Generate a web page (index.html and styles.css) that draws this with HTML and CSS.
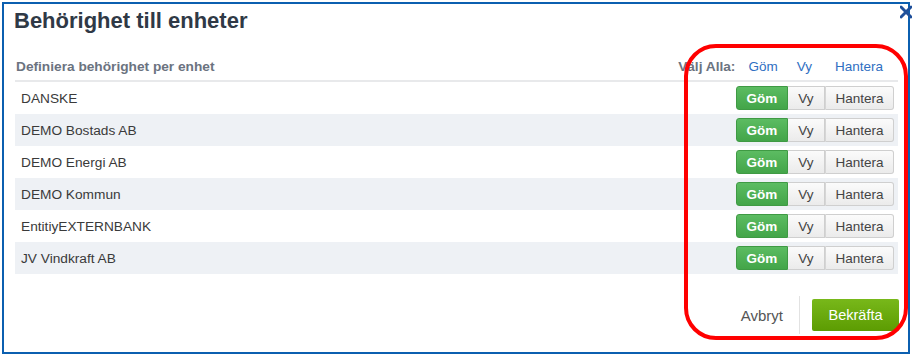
FILE: index.html
```html
<!DOCTYPE html>
<html lang="sv">
<head>
<meta charset="utf-8">
<title>Behörighet till enheter</title>
<link rel="stylesheet" href="styles.css">
</head>
<body>
<div class="dialog">
  <svg class="close" width="12" height="14" viewBox="0 0 12 14"><path d="M1 2 L11 12 M11 2 L1 12" stroke="#1e4f9a" stroke-width="3" stroke-linecap="round"/></svg>
  <h1 class="title">Behörighet till enheter</h1>
  <div class="table">
    <div class="head">
      <span class="head-label">Definiera behörighet per enhet</span>
      <div class="select-all">
        <span class="head-label">Välj Alla:</span>
        <a class="link l-gom">Göm</a>
        <a class="link l-vy">Vy</a>
        <a class="link l-han">Hantera</a>
      </div>
    </div>
    <div class="row"><span class="name">DANSKE</span><div class="group"><span class="btn on">Göm</span><span class="btn vy">Vy</span><span class="btn han">Hantera</span></div></div>
    <div class="row alt"><span class="name">DEMO Bostads AB</span><div class="group"><span class="btn on">Göm</span><span class="btn vy">Vy</span><span class="btn han">Hantera</span></div></div>
    <div class="row"><span class="name">DEMO Energi AB</span><div class="group"><span class="btn on">Göm</span><span class="btn vy">Vy</span><span class="btn han">Hantera</span></div></div>
    <div class="row alt"><span class="name">DEMO Kommun</span><div class="group"><span class="btn on">Göm</span><span class="btn vy">Vy</span><span class="btn han">Hantera</span></div></div>
    <div class="row"><span class="name">EntitiyEXTERNBANK</span><div class="group"><span class="btn on">Göm</span><span class="btn vy">Vy</span><span class="btn han">Hantera</span></div></div>
    <div class="row alt"><span class="name">JV Vindkraft AB</span><div class="group"><span class="btn on">Göm</span><span class="btn vy">Vy</span><span class="btn han">Hantera</span></div></div>
  </div>
  <div class="footer">
    <span class="cancel">Avbryt</span>
    <span class="sep"></span>
    <span class="confirm">Bekräfta</span>
  </div>
  <div class="highlight"></div>
</div>
</body>
</html>
```
FILE: styles.css
```css
* { box-sizing: border-box; }
html, body { margin: 0; padding: 0; background: #fff; }
body { font-family: "Liberation Sans", Arial, sans-serif; }

.dialog {
  position: relative;
  margin: 2px;
  width: 908px;
  height: 352px;
  border: 2px solid #0b5fb0;
  padding: 0 10px 0 11px;
}

.close {
  position: absolute;
  top: 1px;
  right: -4px;
}

.title {
  margin: 0;
  padding: 3px 0 0 0;
  margin-left: -1px;
  font-size: 22px;
  line-height: 28px;
  font-weight: bold;
  color: #2f3946;
}

.table { margin-top: 17px; }

.head {
  display: flex;
  justify-content: space-between;
  align-items: center;
  height: 30px;
  border-bottom: 2px solid #e8e9eb;
  padding: 0 0 0 1px;
}
.head-label {
  font-size: 13.7px;
  font-weight: bold;
  color: #6b7380;
}
.select-all { display: flex; align-items: center; padding-right: 15px; }
.link { font-size: 13.5px; color: #2f6fc2; text-decoration: none; }
.l-gom { margin-left: 13px; }
.l-vy { margin-left: 19px; }
.l-han { margin-left: 23px; }

.row {
  display: flex;
  justify-content: space-between;
  align-items: center;
  height: 32px;
  padding: 0 4px 0 6px;
}
.row.alt { background: #eef1f5; }
.name { font-size: 13.7px; color: #3a3a3a; }

.group { display: flex; height: 24px; }
.btn {
  display: flex;
  align-items: center;
  justify-content: center;
  font-size: 13.5px;
  color: #444;
  border: 1px solid #cfcfcf;
  background: linear-gradient(#fbfbfb, #ebebeb);
}
.btn.on {
  width: 52px;
  color: #fff;
  font-weight: bold;
  border-color: #3f9a44;
  background: linear-gradient(#5cbc62, #43a549);
  border-radius: 3px 0 0 3px;
}
.btn.vy { width: 37px; border-left: none; }
.btn.han { width: 69px; border-left: 1px solid #d6d6d6; border-radius: 0 3px 3px 0; }

.footer {
  position: absolute;
  left: 0;
  right: 0;
  bottom: 18px;
  display: flex;
  justify-content: flex-end;
  align-items: center;
  padding-right: 9px;
}
.cancel { font-size: 15px; color: #555; margin-right: 16px; }
.sep { width: 1px; height: 38px; background: #e2e2e2; margin-right: 12px; }
.confirm {
  display: flex;
  align-items: center;
  justify-content: center;
  width: 87px;
  height: 32px;
  font-size: 14.5px;
  color: #fff;
  background: linear-gradient(#78b81a, #5c9c02);
  border-radius: 2px;
}

.highlight {
  position: absolute;
  left: 680px;
  top: 40px;
  width: 224px;
  height: 296px;
  border: 4px solid #ff0000;
  border-radius: 32px;
  pointer-events: none;
}
```
